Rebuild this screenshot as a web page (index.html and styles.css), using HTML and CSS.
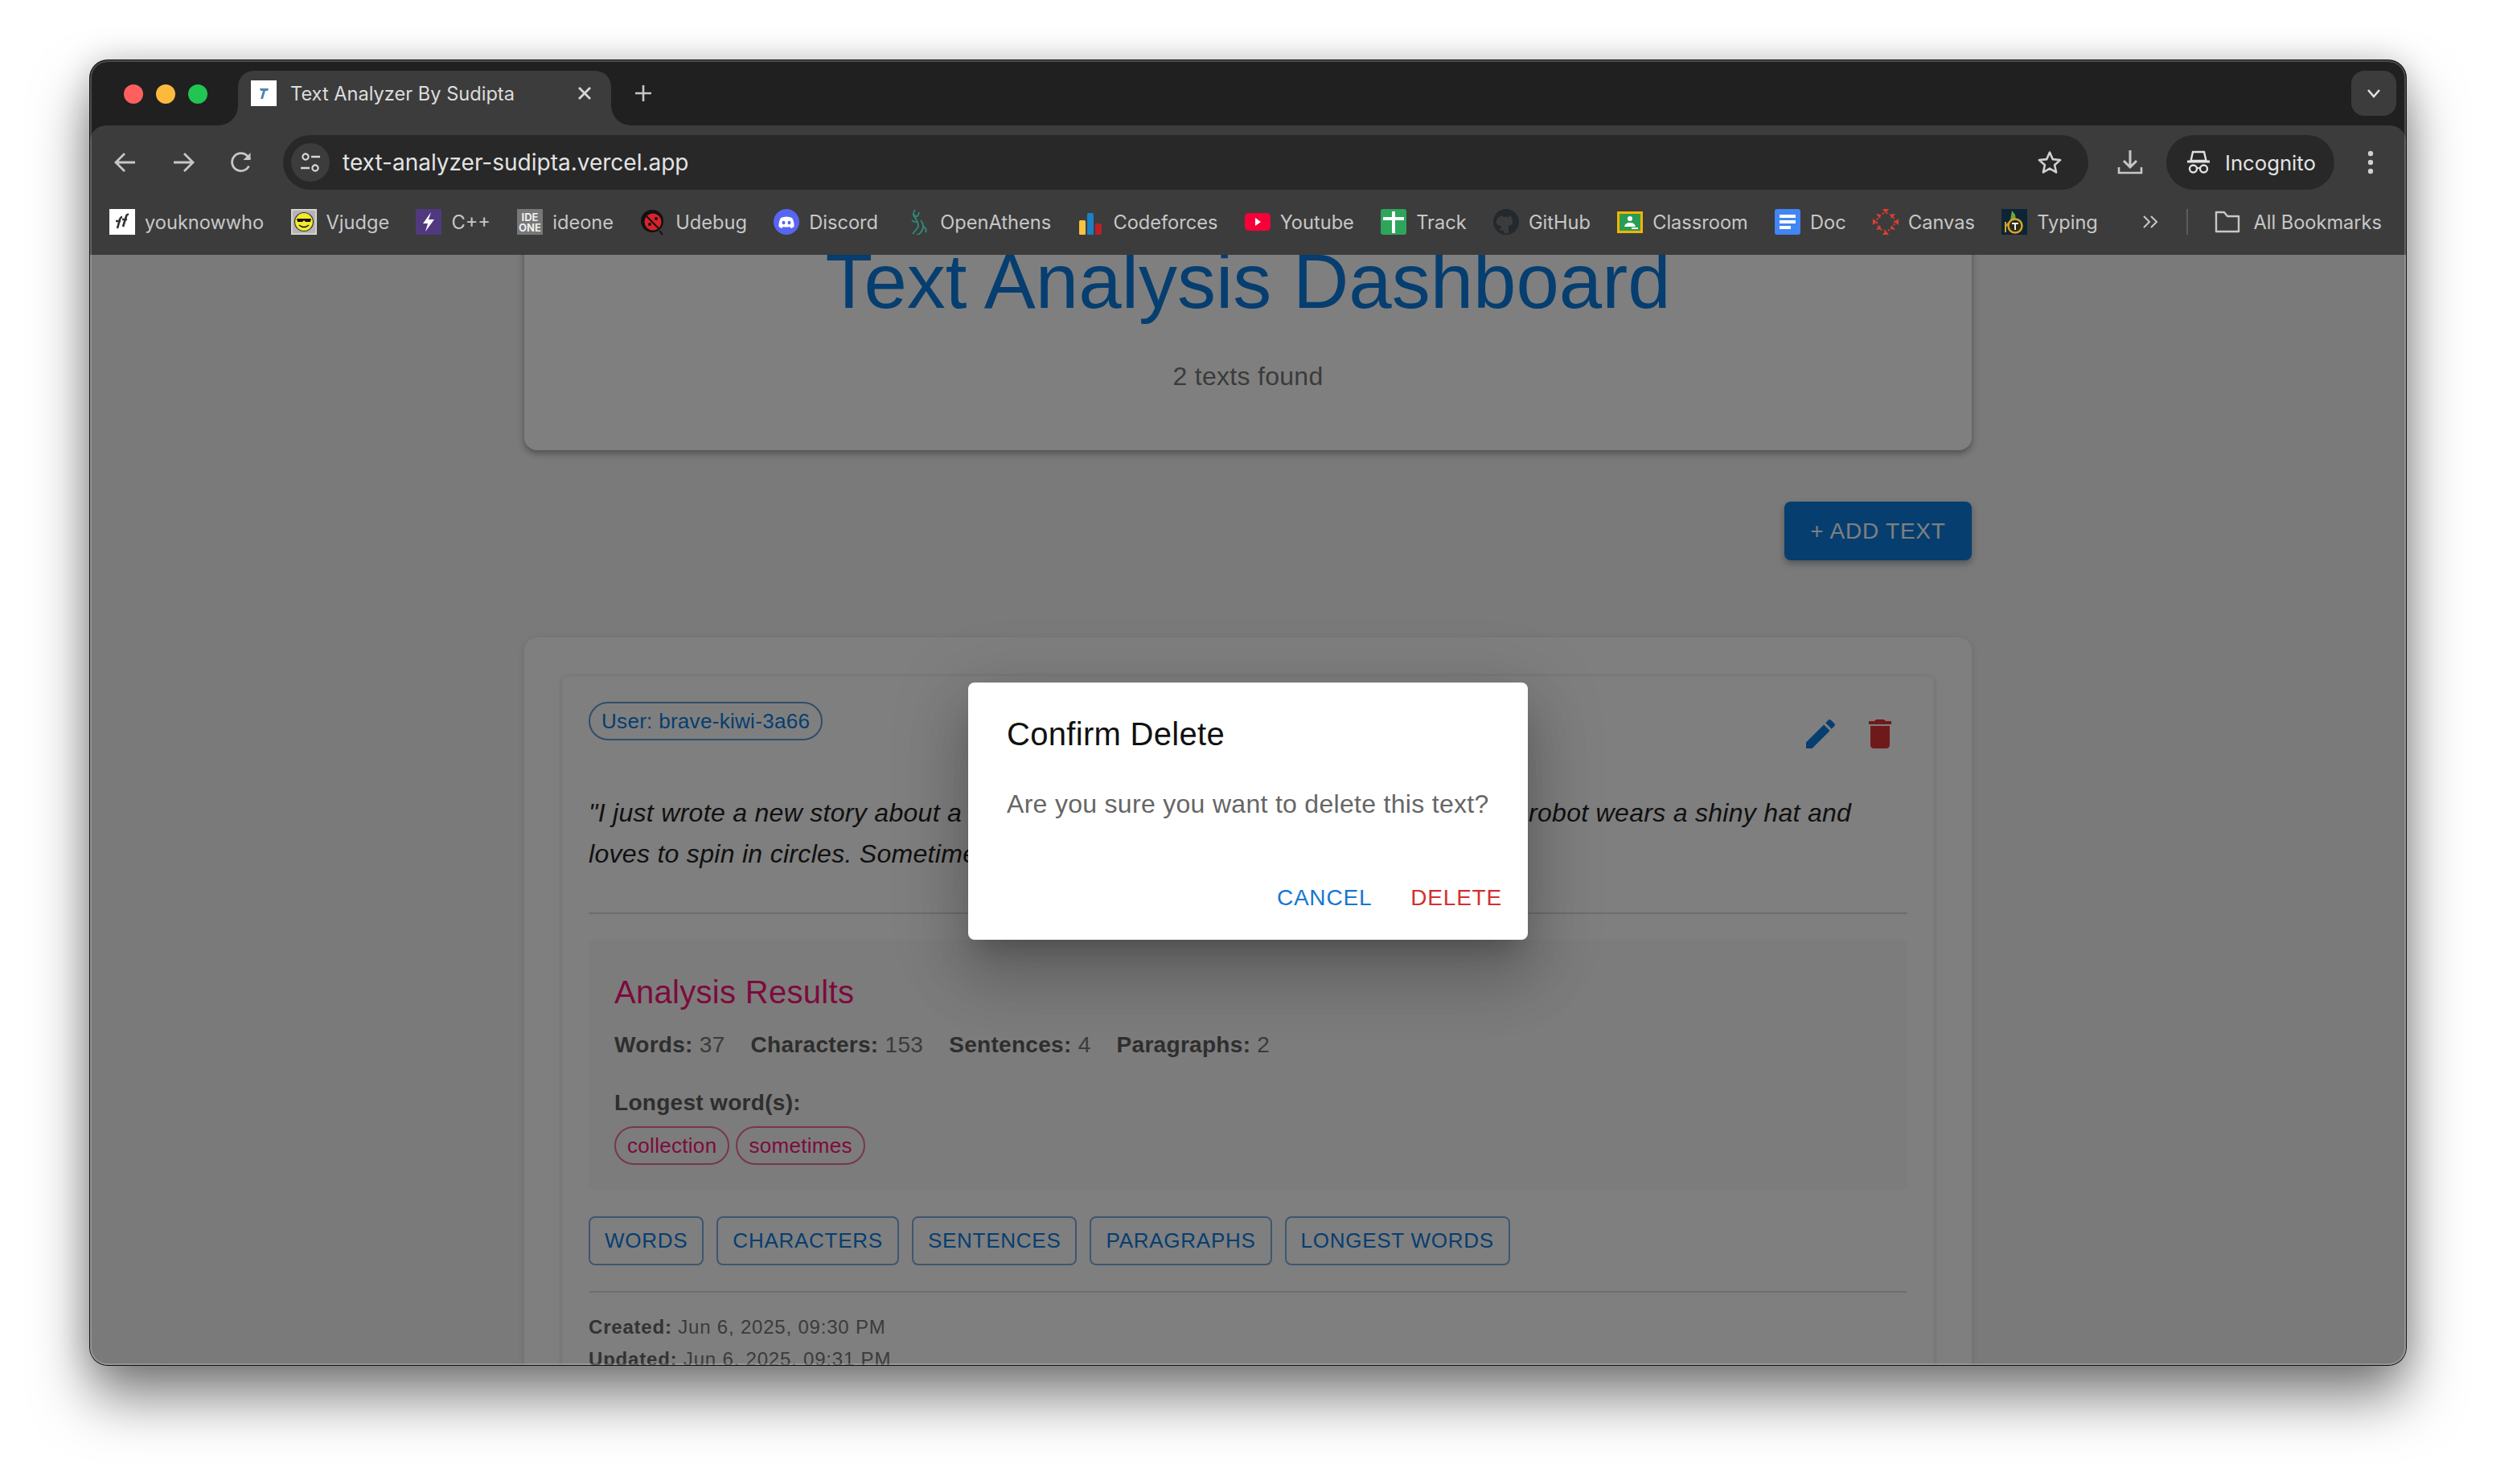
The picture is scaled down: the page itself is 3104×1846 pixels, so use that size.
FILE: index.html
```html
<!DOCTYPE html>
<html lang="en">
<head>
    <meta charset="UTF-8">
    <title>Text Analyzer By Sudipta</title>
    <link rel="stylesheet" href="styles.css">
</head>
<body>
<div class="window">
    <div class="tabstrip">
        <div class="lights">
            <span class="light red"></span>
            <span class="light yellow"></span>
            <span class="light green"></span>
        </div>
        <div class="tab">
            <svg class="favicon" viewBox="0 0 32 32"><rect width="32" height="32" fill="#fff"/><path d="M11 10h11l-1 3h-3l-3 10h-3l3-10h-3z" fill="#4a86b0"/></svg>
            <span class="tab-title">Text Analyzer By Sudipta</span>
            <svg class="tab-close" viewBox="0 0 20 20"><path d="M3 3l14 14M17 3L3 17" stroke="#d8d8d8" stroke-width="2.8" fill="none"/></svg>
        </div>
        <svg class="new-tab" viewBox="0 0 24 24"><path d="M12 2v20M2 12h20" stroke="#c7c7c7" stroke-width="2.6" fill="none"/></svg>
        <div class="tab-search">
            <svg viewBox="0 0 20 20" width="20" height="20"><path d="M3 6l7 8 7-8" stroke="#e0e0e0" stroke-width="2.6" fill="none"/></svg>
        </div>
    </div>

    <div class="toolbar">
        <div class="nav-btn"><svg viewBox="0 0 32 32"><path d="M28 16H5M15 5L4 16l11 11" stroke="#c7c7c7" stroke-width="2.8" fill="none"/></svg></div>
        <div class="nav-btn"><svg viewBox="0 0 32 32"><path d="M4 16h23M17 5l11 11-11 11" stroke="#c7c7c7" stroke-width="2.8" fill="none"/></svg></div>
        <div class="nav-btn"><svg viewBox="0 0 32 32"><path d="M25.5 20.5A11 11 0 1 1 24 8.5L27 12" stroke="#c7c7c7" stroke-width="2.8" fill="none"/><path d="M27.5 4v9h-9z" fill="#c7c7c7"/></svg></div>
        <div class="omnibox">
            <div class="site-info">
                <svg viewBox="0 0 28 28" width="28" height="28"><circle cx="8" cy="7" r="3.6" stroke="#d8d8d8" stroke-width="2.2" fill="none"/><path d="M15 7h11M2 21h11" stroke="#d8d8d8" stroke-width="2.4" fill="none"/><circle cx="20" cy="21" r="3.6" stroke="#d8d8d8" stroke-width="2.2" fill="none"/></svg>
            </div>
            <span class="url">text-analyzer-sudipta.vercel.app</span>
            <svg class="star" viewBox="0 0 32 32"><path d="M16 3.5l3.8 8.6 9.3.9-7 6.2 2 9.2-8.1-4.8-8.1 4.8 2-9.2-7-6.2 9.3-.9z" stroke="#d0d0d0" stroke-width="2.6" fill="none" stroke-linejoin="round"/></svg>
        </div>
        <div class="nav-btn download"><svg viewBox="0 0 32 32"><path d="M16 1v21M8 14l8 8 8-8" stroke="#c7c7c7" stroke-width="3" fill="none"/><path d="M2 22v7h28v-7" stroke="#c7c7c7" stroke-width="2.6" fill="none"/></svg></div>
        <div class="incognito">
            <svg viewBox="0 0 32 32" width="32" height="32"><path d="M9 3h14l2.5 11h-19z" stroke="#e0e0e0" stroke-width="2.4" fill="none"/><path d="M2 15h28" stroke="#e0e0e0" stroke-width="2.8"/><circle cx="9.5" cy="24" r="4.5" stroke="#e0e0e0" stroke-width="2.4" fill="none"/><circle cx="22.5" cy="24" r="4.5" stroke="#e0e0e0" stroke-width="2.4" fill="none"/><path d="M14 23h4" stroke="#e0e0e0" stroke-width="2"/></svg>
            <span>Incognito</span>
        </div>
        <div class="nav-btn kebab"><svg viewBox="0 0 32 32"><circle cx="16" cy="5" r="3.2" fill="#d0d0d0"/><circle cx="16" cy="16" r="3.2" fill="#d0d0d0"/><circle cx="16" cy="27" r="3.2" fill="#d0d0d0"/></svg></div>
    </div>

    <div class="bookmarks">
        <a class="bookmark"><svg viewBox="0 0 32 32"><rect width="32" height="32" fill="#fff"/><path d="M10 24l3-11q1-3 3-3M8 15h6M17 22l4-13q1-3 3-2M16 13h6" stroke="#333" stroke-width="2.6" fill="none"/></svg>youknowwho</a>
        <a class="bookmark"><svg viewBox="0 0 32 32"><rect width="32" height="32" fill="#c8c8c8"/><rect x="1" y="1" width="30" height="30" fill="#b5b5b5" stroke="#e8e8e8"/><circle cx="16" cy="16" r="11.5" fill="#f3ea2d" stroke="#333" stroke-width="1.2"/><path d="M7 12h18l-1 4h-6l-2-2-2 2H8z" fill="#111"/><path d="M10 20q6 5 12 0" stroke="#111" stroke-width="1.6" fill="none"/></svg>Vjudge</a>
        <a class="bookmark"><svg viewBox="0 0 32 32"><rect width="32" height="32" fill="#51397f"/><path d="M19 4L9 18h6l-3 10 11-15h-7z" fill="#fff"/></svg>C++</a>
        <a class="bookmark"><svg viewBox="0 0 32 32"><rect width="32" height="32" fill="#777"/><text class="fav-text" x="16" y="15" text-anchor="middle">IDE</text><text class="fav-text" x="16" y="28" text-anchor="middle">ONE</text></svg>ideone</a>
        <a class="bookmark"><svg viewBox="0 0 32 32"><path d="M24 27l4 5" stroke="#111" stroke-width="2"/><circle cx="15" cy="15" r="14" fill="#111"/><circle cx="16" cy="16" r="10.5" fill="#d8232a"/><path d="M8 9l15 15" stroke="#111" stroke-width="2"/><circle cx="12" cy="19" r="2" fill="#111"/><circle cx="20" cy="12" r="2" fill="#111"/></svg>Udebug</a>
        <a class="bookmark"><svg viewBox="0 0 32 32"><circle cx="16" cy="16" r="16" fill="#5865f2"/><path d="M9 11q7-3 14 0 3 5 2.500 11-2 1.500-4 2l-1.200-2q-4.300 1-8.600 0L10.500 24q-2-.5-4-2Q6 16 9 11z" fill="#fff"/><ellipse cx="12.500" cy="17" rx="2" ry="2.300" fill="#5865f2"/><ellipse cx="19.500" cy="17" rx="2" ry="2.300" fill="#5865f2"/></svg>Discord</a>
        <a class="bookmark"><svg viewBox="0 0 32 32"><path d="M13 1q-4 5 0 10t4 11q-3 4-7 9M20 14q5 6 2 12t-7 6M24 22q4 3 2 7M10 6q2 3 5 3M18 4q-1 4-3 6M9 14q3 3 7 2" stroke="#2f8f7e" stroke-width="1.7" fill="none"/></svg>OpenAthens</a>
        <a class="bookmark"><svg viewBox="0 0 32 32"><rect x="2" y="14" width="8" height="18" rx="1.500" fill="#f6c343"/><rect x="12" y="5" width="8" height="27" rx="1.500" fill="#1c80c4"/><rect x="22" y="18" width="8" height="14" rx="1.500" fill="#b9202a"/></svg>Codeforces</a>
        <a class="bookmark"><svg viewBox="0 0 32 32"><rect y="5" width="32" height="22" rx="5" fill="#f5003a"/><path d="M13 11l7 5-7 5z" fill="#fff"/></svg>Youtube</a>
        <a class="bookmark"><svg viewBox="0 0 32 32"><rect width="32" height="32" rx="3" fill="#2da55b"/><path d="M14 3h4v27h-4zM3 10h26v4H3z" fill="#fff"/></svg>Track</a>
        <a class="bookmark"><svg viewBox="0 0 32 32"><circle cx="16" cy="16" r="16" fill="#24292e"/><path d="M10 8l3 2q3-1 6 0l3-2 1 4q2 3 1 6-2 3-6 3 1 1 1 3v6h-6v-3q-4 1-6-3l3 1v-4q-4 0-6-3-1-3 1-6z" fill="#3c3c3c"/></svg>GitHub</a>
        <a class="bookmark"><svg viewBox="0 0 32 32"><rect y="3" width="32" height="27" fill="#f4b400"/><rect x="3" y="6" width="26" height="21" fill="#2a9d55"/><circle cx="16" cy="12" r="3" fill="#fff"/><path d="M9 22q1-5 7-5t7 5z" fill="#fff"/><rect x="18" y="23" width="8" height="2" fill="#fff"/></svg>Classroom</a>
        <a class="bookmark"><svg viewBox="0 0 32 32"><rect width="32" height="32" rx="3" fill="#4285f4"/><path d="M6 7h20v4H6zM6 14h20v4H6zM6 21h14v4H6z" fill="#fff"/></svg>Doc</a>
        <a class="bookmark"><svg viewBox="0 0 32 32"><circle cx="16" cy="16" r="11" stroke="#d33a2e" stroke-width="2" stroke-dasharray="2.500 2.500" fill="none" transform="rotate(10 16 16)"/><path d="M12 0h8l-4 5zM12 32h8l-4-5zM0 12v8l5-4zM32 12v8l-5-4z" fill="#e0402f"/><path d="M4 6l6 1-1 5zM28 6l-6 1 1 5zM4 26l6-1-1-5zM28 26l-6-1 1-5z" fill="#e0402f"/></svg>Canvas</a>
        <a class="bookmark"><svg viewBox="0 0 32 32"><rect width="32" height="32" fill="#0d2436"/><path d="M13 2l4 5 1 7h-7z" fill="#6fa83c"/><circle cx="17" cy="21" r="8.500" fill="#2a2a18" stroke="#d9a520" stroke-width="2.500"/><path d="M13 18h8M17 18v8" stroke="#eee" stroke-width="2"/><path d="M5 16v13M5 22l4-5" stroke="#d9a520" stroke-width="2" fill="none"/></svg>Typing</a>
        <svg class="more" viewBox="0 0 24 24"><path d="M4 5l7 7-7 7M13 5l7 7-7 7" stroke="#c7c7c7" stroke-width="2" fill="none"/></svg>
        <span class="bm-sep"></span>
        <a class="bookmark all"><svg viewBox="0 0 32 32"><path d="M2 28V4h10l4 5h14v19z" stroke="#c7c7c7" stroke-width="2.400" fill="none" stroke-linejoin="round"/></svg>All Bookmarks</a>
    </div>

    <div class="viewport">
        <main class="page">
            <section class="hero">
                <h1>Text Analysis Dashboard</h1>
                <p>2 texts found</p>
            </section>

            <div class="add-row">
                <button class="add-btn">+ Add Text</button>
            </div>

            <section class="paper">
                <article class="text-card">
                    <div class="card-head">
                        <span class="chip">User: brave-kiwi-3a66</span>
                        <div class="card-actions">
                            <span class="icon-btn"><svg class="edit" viewBox="0 0 24 24"><path d="M3 17.250V21h3.750L17.810 9.940l-3.750-3.750L3 17.250zM20.710 7.040c.39-.39.39-1.020 0-1.410l-2.340-2.340c-.39-.39-1.020-.39-1.410 0l-1.830 1.830 3.750 3.750 1.830-1.830z"/></svg></span>
                            <span class="icon-btn"><svg class="trash" viewBox="0 0 24 24"><path d="M6 19c0 1.100.9 2 2 2h8c1.100 0 2-.9 2-2V7H6v12zM19 4h-3.500l-1-1h-5l-1 1H5v2h14V4z"/></svg></span>
                        </div>
                    </div>
                    <p class="quote">"I just wrote a new story about a little robot and its collection of tiny old toys. The robot wears a shiny hat and loves to spin in circles. Sometimes it dances all night long."</p>
                    <hr class="rule">
                    <div class="results">
                        <h2>Analysis Results</h2>
                        <div class="stats">
                            <span><b>Words:</b> 37</span>
                            <span><b>Characters:</b> 153</span>
                            <span><b>Sentences:</b> 4</span>
                            <span><b>Paragraphs:</b> 2</span>
                        </div>
                        <div class="longest-label">Longest word(s):</div>
                        <div class="longest">
                            <span class="chip red-chip">collection</span>
                            <span class="chip red-chip">sometimes</span>
                        </div>
                    </div>
                    <div class="sort-btns">
                        <button class="sort-btn">Words</button>
                        <button class="sort-btn">Characters</button>
                        <button class="sort-btn">Sentences</button>
                        <button class="sort-btn">Paragraphs</button>
                        <button class="sort-btn">Longest Words</button>
                    </div>
                    <hr class="rule lower">
                    <p class="meta"><b>Created:</b> Jun 6, 2025, 09:30 PM</p>
                    <p class="meta"><b>Updated:</b> Jun 6, 2025, 09:31 PM</p>
                </article>
            </section>
        </main>

        <div class="backdrop">
            <div class="dialog">
                <h3>Confirm Delete</h3>
                <p>Are you sure you want to delete this text?</p>
                <div class="dialog-actions">
                    <button class="dlg-btn cancel">Cancel</button>
                    <button class="dlg-btn delete">Delete</button>
                </div>
            </div>
        </div>
    </div>
</div>
</body>
</html>
```

FILE: styles.css
```css
* {
    box-sizing: border-box;
}
html, body {
    margin: 0;
    height: 100%;
    background-color: #fff;
}
body {
    width: 3104px;
    height: 1846px;
    padding: 75px 112px 148px;
    overflow: hidden;
    font-family: "Liberation Sans", Arial, sans-serif;
}

/* browser chrome */
.window {
    position: relative;
    display: flex;
    flex-direction: column;
    height: 100%;
    background-color: #202020;
    border-radius: 22px;
    overflow: hidden;
    box-shadow: 0 0 0 1px #111, 0 40px 70px rgba(0, 0, 0, 0.5), 0 0 40px rgba(0, 0, 0, 0.18);
}
.window::after {
    content: "";
    position: absolute;
    inset: 0;
    border-radius: 22px;
    box-shadow: inset 0 0 0 2px rgba(255, 255, 255, 0.2);
    pointer-events: none;
}
.tabstrip {
    display: flex;
    align-items: flex-end;
    height: 81px;
    flex: none;
    font-family: Inter, "Liberation Sans", sans-serif;
}
.lights {
    display: flex;
    gap: 16px;
    width: 184px;
    padding: 0 0 27px 42px;
}
.light {
    width: 24px;
    height: 24px;
    border-radius: 50%;
}
.red { background-color: #ff5f5f; }
.yellow { background-color: #fdb93e; }
.green { background-color: #21c552; }
.tab {
    position: relative;
    display: flex;
    align-items: center;
    width: 464px;
    height: 68px;
    padding: 0 0 12px 16px;
    background-color: #3c3c3c;
    border-radius: 20px 20px 0 0;
}
.tab::before, .tab::after {
    content: "";
    position: absolute;
    bottom: 0;
    width: 24px;
    height: 24px;
}
.tab::before {
    left: -24px;
    background: radial-gradient(circle at 0 0, transparent 23.5px, #3c3c3c 24px);
}
.tab::after {
    right: -24px;
    background: radial-gradient(circle at 100% 0, transparent 23.5px, #3c3c3c 24px);
}
.favicon {
    width: 32px;
    height: 32px;
}
.tab-title {
    margin-left: 17px;
    width: 356px;
    font-size: 23.6px;
    color: #dcdcdc;
    white-space: nowrap;
}
.tab-close {
    width: 20px;
    height: 20px;
}
.new-tab {
    width: 24px;
    height: 24px;
    margin: 0 0 28px 28px;
}
.tab-search {
    display: flex;
    align-items: center;
    justify-content: center;
    width: 56px;
    height: 56px;
    margin: 0 12px 12px auto;
    background-color: #3c3c3c;
    border-radius: 16px;
}

.toolbar {
    display: flex;
    align-items: center;
    flex: none;
    height: 80px;
    padding: 12px 8px 0;
    background-color: #3c3c3c;
    border-radius: 20px 20px 0 0;
    font-family: Inter, "Liberation Sans", sans-serif;
}
.nav-btn {
    display: flex;
    align-items: center;
    justify-content: center;
    flex: none;
    width: 72px;
    height: 68px;
}
.nav-btn svg {
    width: 32px;
    height: 32px;
}
.omnibox {
    display: flex;
    align-items: center;
    flex: 1;
    height: 68px;
    margin-left: 16px;
    padding: 0 32px 0 10px;
    background-color: #282828;
    border-radius: 34px;
}
.site-info {
    display: flex;
    align-items: center;
    justify-content: center;
    width: 48px;
    height: 48px;
    background-color: #3c3c3c;
    border-radius: 50%;
}
.url {
    flex: 1;
    margin-left: 16px;
    font-size: 28px;
    color: #e3e3e3;
}
.star {
    width: 32px;
    height: 32px;
}
.download {
    margin-left: 16px;
}
.incognito {
    display: flex;
    align-items: center;
    gap: 17px;
    flex: none;
    width: 209px;
    height: 68px;
    margin-left: 9px;
    padding-left: 24px;
    background-color: #282828;
    border-radius: 34px;
    font-size: 25.7px;
    color: #e3e3e3;
}
.kebab {
    margin-left: 9px;
}

.bookmarks {
    display: flex;
    align-items: center;
    flex: none;
    gap: 33.3px;
    height: 81px;
    padding: 0 30px 1px 24px;
    background-color: #3c3c3c;
    font-family: Inter, "Liberation Sans", sans-serif;
}
.bookmark {
    display: flex;
    align-items: center;
    gap: 12px;
    font-size: 23.6px;
    color: #c7c7c7;
    white-space: nowrap;
}
.bookmark svg {
    width: 32px;
    height: 32px;
    flex: none;
}
.fav-text {
    font-size: 13px;
    font-weight: 700;
    fill: #eee;
}
.more {
    flex: none;
    width: 24px;
    height: 24px;
    margin-left: auto;
}
.bm-sep {
    flex: none;
    width: 2px;
    height: 32px;
    background-color: #5c5c5c;
}
.bookmark.all {
    gap: 16px;
}

/* page behind the dialog */
.viewport {
    position: relative;
    flex: 1;
    overflow: hidden;
    background-color: #f4f4f4;
}
.page {
    width: 1800px;
    margin: 0 auto;
}
.hero {
    margin-top: -71px;
    padding: 48px 0 68px;
    text-align: center;
    background-color: #fff;
    border-radius: 16px;
    box-shadow: 0 4px 8px rgba(0, 0, 0, 0.35);
}
.hero h1 {
    margin: 0;
    font-size: 96px;
    font-weight: 400;
    line-height: 112px;
    color: #0c7ce0;
}
.hero p {
    margin: 38px 0 0;
    font-size: 32px;
    line-height: 48px;
    letter-spacing: 0.3px;
    color: #777;
}
.add-row {
    display: flex;
    justify-content: flex-end;
    margin-top: 64px;
}
.add-btn {
    height: 73px;
    width: 233px;
    padding: 0;
    border: 0;
    border-radius: 8px;
    font: inherit;
    font-size: 28px;
    letter-spacing: 0.8px;
    text-transform: uppercase;
    color: #fff;
    background-color: #0c7ce0;
    box-shadow: 0 4px 8px rgba(0, 0, 0, 0.3);
}
.paper {
    margin-top: 96px;
    padding: 48px 47px;
    background-color: #fff;
    border-radius: 16px;
    box-shadow: 0 2px 8px rgba(0, 0, 0, 0.12);
}
.text-card {
    padding: 32px 33px;
    background-color: #fff;
    border-radius: 8px;
    box-shadow: 0 1px 6px rgba(0, 0, 0, 0.18);
}
.card-head {
    display: flex;
    justify-content: space-between;
    height: 80px;
}
.chip {
    display: inline-block;
    height: 48px;
    padding: 0 14px;
    border: 2px solid #5f9ad2;
    border-radius: 24px;
    font-size: 26px;
    line-height: 44px;
    letter-spacing: 0.3px;
    color: #0c7ce0;
}
.card-actions {
    display: flex;
    gap: 2px;
    margin-right: -2px;
}
.icon-btn {
    display: flex;
    align-items: center;
    justify-content: center;
    width: 72px;
    height: 80px;
}
.icon-btn svg {
    width: 48px;
    height: 48px;
}
.edit { fill: #0c7ce0; }
.trash { fill: #de3535; }
.quote {
    margin: 33px 0 47px;
    font-size: 32px;
    line-height: 51.2px;
    letter-spacing: 0.3px;
    font-style: italic;
    color: #222;
}
.rule {
    height: 2px;
    margin: 0;
    border: 0;
    background-color: #dcdcdc;
}
.rule.lower {
    margin-top: 32px;
}
.results {
    margin-top: 32px;
    padding: 41px 33px 31px 32px;
    background-color: #f8f8f8;
    border-radius: 8px;
}
.results h2 {
    margin: 0;
    font-size: 40px;
    font-weight: 400;
    line-height: 48px;
    letter-spacing: 0.3px;
    color: #f8167a;
}
.stats {
    display: flex;
    gap: 32px;
    margin-top: 21px;
    font-size: 28px;
    line-height: 42px;
    letter-spacing: 0.3px;
    color: #777;
}
.stats b, .longest-label {
    color: #5c5c5c;
}
.longest-label {
    margin-top: 30px;
    font-size: 28px;
    font-weight: 700;
    line-height: 42px;
    letter-spacing: 0.3px;
}
.longest {
    display: flex;
    gap: 8px;
    margin-top: 8px;
}
.red-chip {
    border-color: #f06d9c;
    color: #f8167a;
}
.sort-btns {
    display: flex;
    gap: 16px;
    margin-top: 33px;
}
.sort-btn {
    height: 61px;
    padding: 0 18px;
    border: 2px solid #7cade0;
    border-radius: 8px;
    background: none;
    font: inherit;
    font-size: 26px;
    letter-spacing: 0.74px;
    text-transform: uppercase;
    color: #0c7ce0;
}
.meta {
    margin: 0;
    font-size: 24px;
    line-height: 40px;
    letter-spacing: 0.8px;
    color: #777;
}
.rule.lower + .meta {
    margin-top: 23px;
}
.meta b {
    color: #666;
}

/* dialog */
.backdrop {
    position: absolute;
    inset: 0;
    display: flex;
    align-items: center;
    justify-content: center;
    background-color: rgba(0, 0, 0, 0.5);
}
.dialog {
    width: 696px;
    margin-top: 2px;
    padding-top: 32px;
    background-color: #fff;
    border-radius: 8px;
    box-shadow: 0 22px 30px -14px rgba(0, 0, 0, 0.2), 0 48px 76px 6px rgba(0, 0, 0, 0.14), 0 18px 92px 16px rgba(0, 0, 0, 0.12);
}
.dialog h3 {
    margin: 0;
    padding: 0 48px;
    font-size: 40px;
    font-weight: 400;
    line-height: 64px;
    letter-spacing: 0.3px;
    color: #111;
}
.dialog p {
    margin: 31px 0 0;
    padding: 0 48px;
    font-size: 32px;
    line-height: 48px;
    letter-spacing: 0.3px;
    color: #666;
}
.dialog-actions {
    display: flex;
    justify-content: flex-end;
    gap: 16px;
    margin-top: 57px;
    padding: 0 16px 16px;
}
.dlg-btn {
    height: 72px;
    padding: 0 16px;
    border: 0;
    background: none;
    font: inherit;
    font-size: 28px;
    letter-spacing: 0.8px;
    text-transform: uppercase;
}
.cancel { color: #1976d2; }
.delete { color: #d32f2f; }
```
